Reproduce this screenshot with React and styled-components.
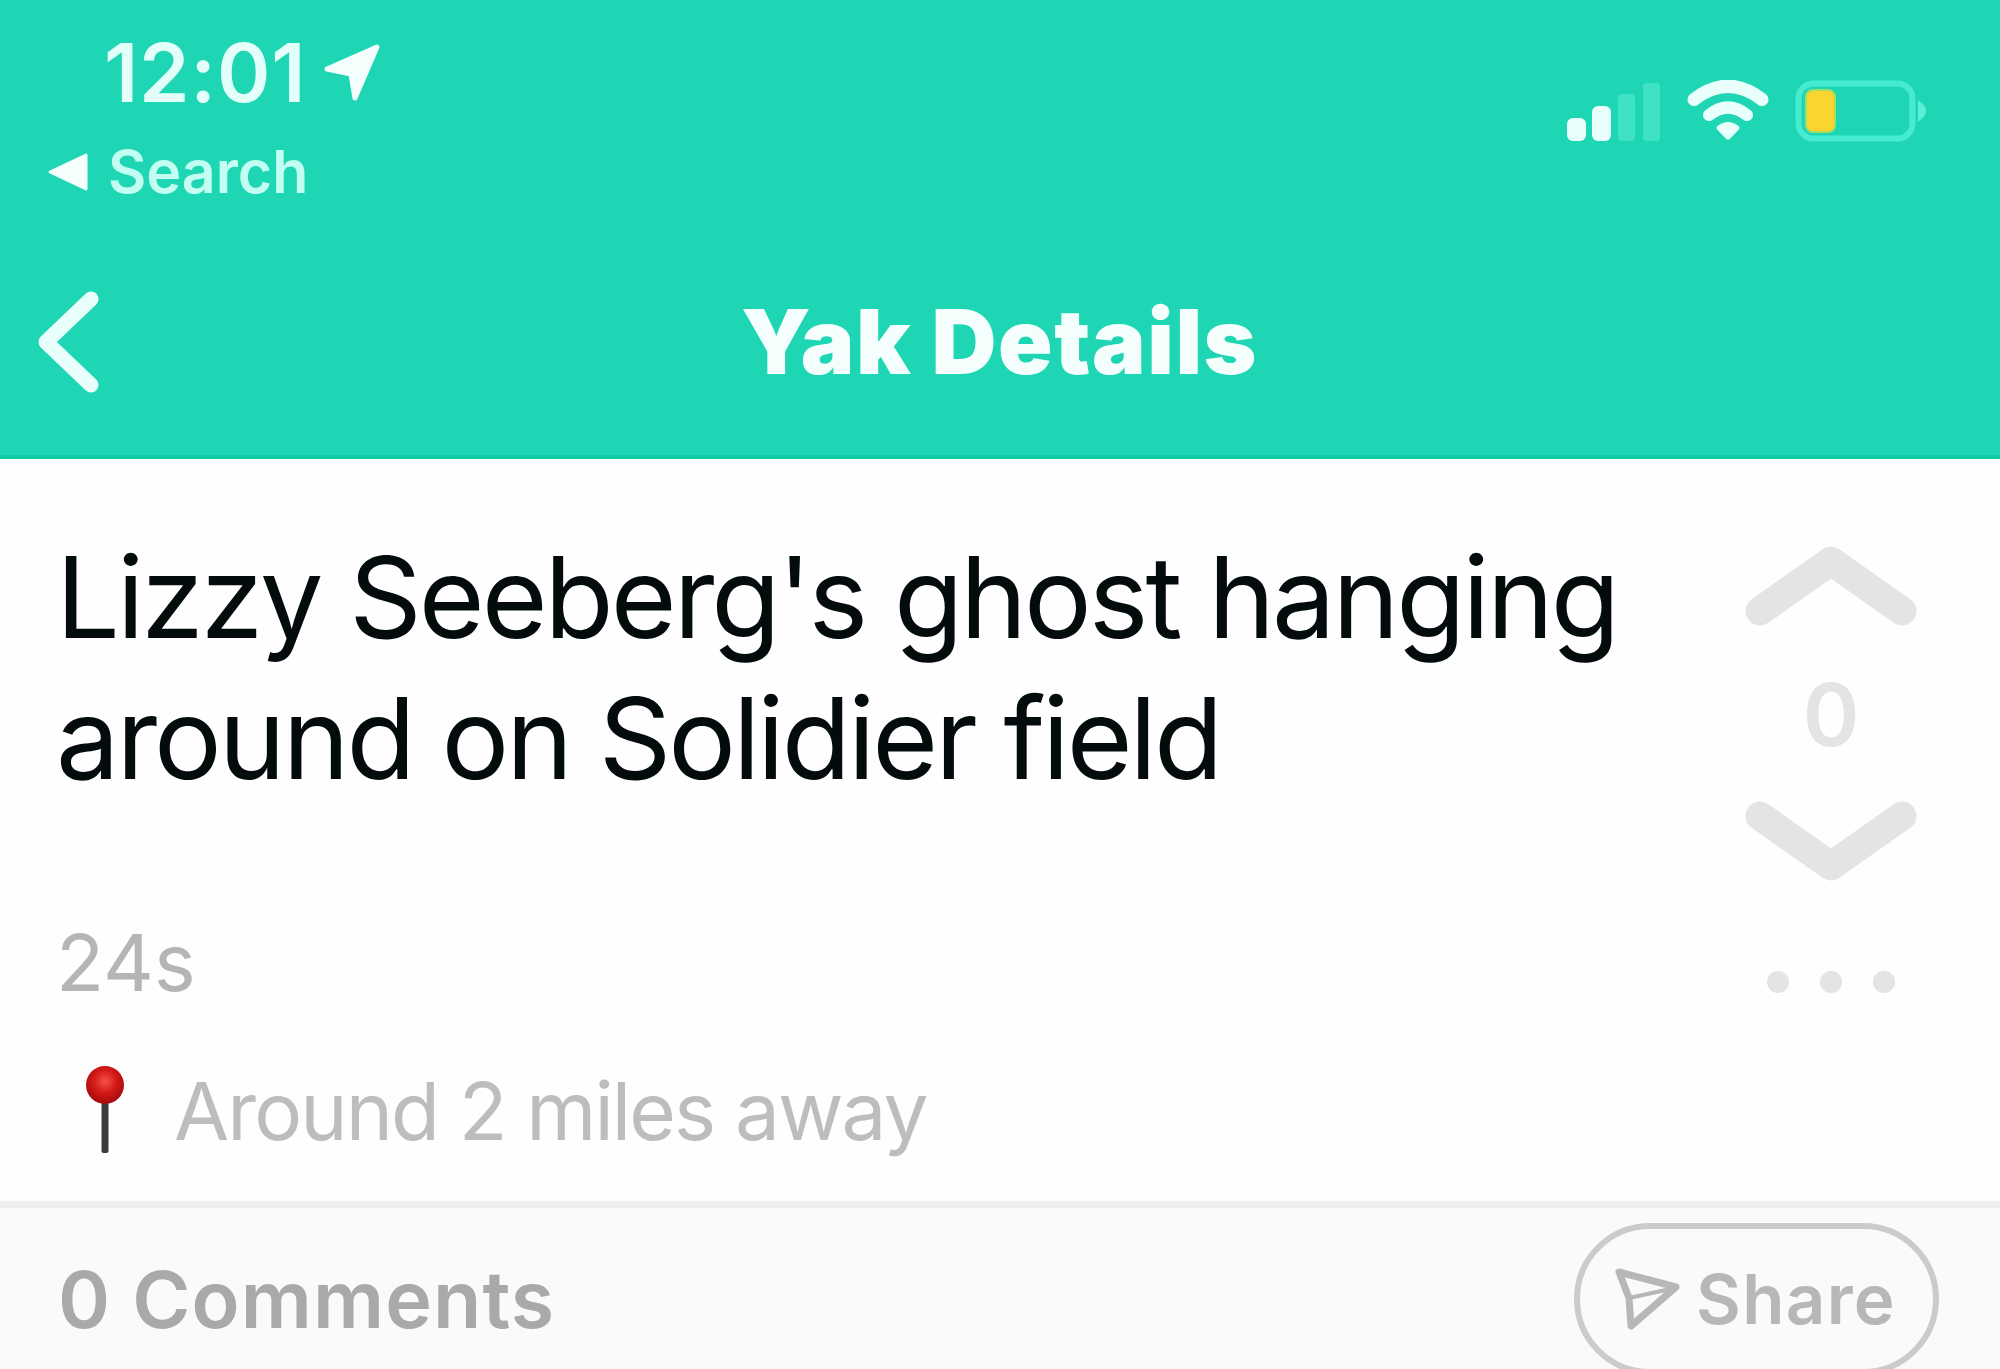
import React from 'react';
import styled, { createGlobalStyle } from 'styled-components';

const GlobalStyle = createGlobalStyle`
  * {
    box-sizing: border-box;
  }

  body {
    margin: 0;
    background: #fefefe;
    font-family: Inter, 'Liberation Sans', sans-serif;
    overflow: hidden;
  }
`;

const Screen = styled.div`
  display: flex;
  flex-direction: column;
  width: 2000px;
  height: 1369px;
  overflow: hidden;
  background: #fefefe;
`;

const Header = styled.header`
  flex: none;
  height: 459px;
  background: #1ed6b4;
  border-bottom: 4px solid #12cba6;
  color: #f4fffd;
`;

const StatusBar = styled.div`
  display: flex;
  justify-content: space-between;
  height: 220px;
  padding: 23px 71px 0 47px;
`;

const TimeRow = styled.div`
  display: flex;
  align-items: center;
  gap: 17px;
  height: 100px;
  padding-left: 57px;
`;

const Time = styled.span`
  font-size: 81px;
  font-weight: 600;
  line-height: 100px;
  letter-spacing: 0.8px;
  color: #e2fffa;
`;

const BackToApp = styled.div`
  display: flex;
  align-items: center;
  gap: 19px;
  height: 60px;
  margin-top: 19px;
  font-size: 59px;
  font-weight: 600;
  line-height: 60px;
  letter-spacing: 0;
  color: #c2fff2;
`;

const StatusIcons = styled.div`
  display: flex;
  align-items: flex-start;
  gap: 26px;
  padding-top: 57px;
`;

const NavBar = styled.nav`
  display: grid;
  grid-template-columns: 200px 1fr 200px;
  align-items: center;
  height: 235px;
  padding: 9px 0 0;
`;

const BackButton = styled.button`
  display: flex;
  padding: 0 0 0 37px;
  border: none;
  background: transparent;
  cursor: pointer;
`;

const Title = styled.h1`
  margin: 0;
  padding-right: 1px;
  font-size: 90px;
  font-weight: 900;
  line-height: 110px;
  letter-spacing: 1.5px;
  text-align: center;
`;

const Post = styled.main`
  display: flex;
  justify-content: space-between;
  flex: none;
  height: 742px;
  padding: 68px 82px 0 56px;
`;

const PostBody = styled.div`
  display: flex;
  flex-direction: column;
`;

const Message = styled.p`
  margin: 0;
  font-size: 113px;
  font-weight: 400;
  line-height: 141px;
  letter-spacing: -3px;
  white-space: nowrap;
  color: #040b0d;
`;

const Age = styled.span`
  margin-top: 103px;
  font-size: 79px;
  line-height: 100px;
  color: #b5b5b5;
`;

const Location = styled.div`
  display: flex;
  align-items: center;
  gap: 49px;
  height: 100px;
  margin-top: 49px;
  padding-left: 29px;
`;

const Distance = styled.span`
  font-size: 80px;
  line-height: 100px;
  letter-spacing: -1.9px;
  color: #bdbdbd;
`;

const Votes = styled.aside`
  display: flex;
  flex-direction: column;
  align-items: center;
  width: 174px;
  padding-top: 16px;
`;

const VoteCount = styled.span`
  margin: 36px 0 33px;
  font-size: 86px;
  font-weight: 600;
  line-height: 100px;
  color: #e4e4e4;
`;

const Dots = styled.div`
  display: flex;
  gap: 31px;
  margin-top: 87px;
`;

const Dot = styled.span`
  width: 22px;
  height: 22px;
  border-radius: 50%;
  background: #e4e4e4;
`;

const CommentsBar = styled.footer`
  display: flex;
  align-items: flex-start;
  justify-content: space-between;
  flex: none;
  height: 200px;
  padding: 15px 61px 0 58px;
  border-top: 7px solid #efefef;
  background: #fafafa;
`;

const CommentsCount = styled.h2`
  margin: 26px 0 0;
  font-size: 79px;
  font-weight: 600;
  line-height: 100px;
  letter-spacing: 1.1px;
  color: #a9a9a9;
`;

const ShareButton = styled.button`
  display: flex;
  align-items: center;
  gap: 14px;
  width: 365px;
  height: 152px;
  padding: 0 0 0 34px;
  border: 6px solid #cbcbcb;
  border-radius: 77px;
  background: transparent;
  font-family: inherit;
  font-size: 69px;
  font-weight: 600;
  line-height: 90px;
  letter-spacing: 1.3px;
  color: #b7b7b7;
  cursor: pointer;
`;

const LocationArrow = () => (
  <svg width="58" height="58" viewBox="0 0 58 58">
    <path
      d="M54 3 L32 54 L28 30 L4 25 Z"
      fill="#f4fffd"
      stroke="#f4fffd"
      strokeWidth="5"
      strokeLinejoin="round"
    />
  </svg>
);

const BackTriangle = () => (
  <svg width="42" height="40" viewBox="0 0 42 40">
    <path d="M3 20 L39 3 V37 Z" fill="#f4fffd" stroke="#f4fffd" strokeWidth="3" strokeLinejoin="round" />
  </svg>
);

const SignalIcon = () => (
  <svg width="94" height="62" viewBox="0 0 94 62">
    <g fill="#e8fffb">
      <rect x="0" y="38" width="19" height="23" rx="6" />
      <rect x="25" y="26" width="19" height="35" rx="6" />
    </g>
    <g fill="#3fe2c5">
      <rect x="51" y="14" width="17" height="47" rx="4" />
      <rect x="76" y="3" width="17" height="58" rx="4" />
    </g>
  </svg>
);

const WifiIcon = () => (
  <svg width="82" height="62" viewBox="0 0 82 62" fill="none" stroke="#e8fffb" strokeLinecap="round">
    <path d="M7 19.500 Q41 -7 75 19.500" strokeWidth="13" />
    <path d="M22 35 Q41 20 60 35" strokeWidth="12" />
    <path d="M32 48 Q41 41 50 48 L41 57 Z" fill="#e8fffb" strokeWidth="5" strokeLinejoin="round" />
  </svg>
);

const BatteryIcon = () => (
  <svg width="134" height="63" viewBox="0 0 134 63">
    <rect x="3.500" y="3.500" width="114" height="55" rx="15" fill="none" stroke="#46ecd0" strokeWidth="6" />
    <rect x="11" y="10" width="29" height="42" rx="7" fill="#fbd52f" stroke="#a5dd62" strokeWidth="2" />
    <path d="M124 22 Q136 31 124 40 Z" fill="#5aefd6" stroke="#5aefd6" strokeWidth="2" />
  </svg>
);

const BackChevron = () => (
  <svg width="64" height="106" viewBox="0 0 64 106">
    <path
      d="M54 10 L9 53 L54 96"
      fill="none"
      stroke="#e8fffb"
      strokeWidth="15"
      strokeLinecap="round"
      strokeLinejoin="round"
    />
  </svg>
);

const PinIcon = () => (
  <svg width="40" height="92" viewBox="0 0 40 92">
    <defs>
      <radialGradient id="pinHead" cx="0.5" cy="0.4" r="0.55">
        <stop offset="0" stopColor="#f5504a" />
        <stop offset="0.55" stopColor="#d41a18" />
        <stop offset="1" stopColor="#a90d0d" />
      </radialGradient>
    </defs>
    <rect x="16.500" y="36" width="7" height="52" rx="2" fill="#3c3c3c" />
    <circle cx="20" cy="20" r="19" fill="url(#pinHead)" />
  </svg>
);

const VoteArrow = ({ down }) => (
  <svg width="174" height="86" viewBox="0 0 174 86">
    <path
      d={down ? 'M16 18 L87 68 L158 18' : 'M16 68 L87 18 L158 68'}
      fill="none"
      stroke="#e4e4e4"
      strokeWidth="29"
      strokeLinecap="round"
      strokeLinejoin="round"
    />
  </svg>
);

const SendIcon = () => (
  <svg width="68" height="64" viewBox="0 0 68 64" fill="none" stroke="#b7b7b7" strokeWidth="7" strokeLinejoin="round">
    <path d="M5 5 L62 20 L17 59 L15 31 Z" />
    <path d="M15 31 L61 21" strokeWidth="4" />
  </svg>
);

const App = () => {
  return (
    <Screen>
      <GlobalStyle />
      <Header>
        <StatusBar>
          <div>
            <TimeRow>
              <Time>12:01</Time>
              <LocationArrow />
            </TimeRow>
            <BackToApp>
              <BackTriangle />
              <span>Search</span>
            </BackToApp>
          </div>
          <StatusIcons>
            <SignalIcon />
            <WifiIcon />
            <BatteryIcon />
          </StatusIcons>
        </StatusBar>
        <NavBar>
          <BackButton aria-label="Back">
            <BackChevron />
          </BackButton>
          <Title>Yak Details</Title>
        </NavBar>
      </Header>

      <Post>
        <PostBody>
          <Message>
            Lizzy Seeberg's ghost hanging
            <br />
            around on Solidier field
          </Message>
          <Age>24s</Age>
          <Location>
            <PinIcon />
            <Distance>Around 2 miles away</Distance>
          </Location>
        </PostBody>
        <Votes>
          <VoteArrow />
          <VoteCount>0</VoteCount>
          <VoteArrow down />
          <Dots>
            <Dot />
            <Dot />
            <Dot />
          </Dots>
        </Votes>
      </Post>

      <CommentsBar>
        <CommentsCount>0 Comments</CommentsCount>
        <ShareButton>
          <SendIcon />
          Share
        </ShareButton>
      </CommentsBar>
    </Screen>
  );
};

export default App;
